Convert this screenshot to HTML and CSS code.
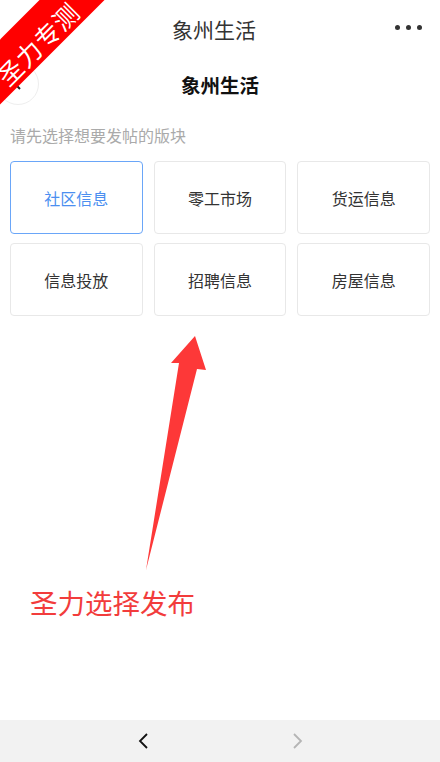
FILE: index.html
```html
<!DOCTYPE html>
<html lang="zh-CN">
<head>
    <meta charset="UTF-8">
    <meta name="viewport" content="width=device-width, initial-scale=1.0">
    <title>象州生活</title>
    <link rel="stylesheet" href="styles.css">
</head>
<body>
    <div class="page">

        <!-- Top Bar -->
        <div class="top-bar">
            <span class="top-title">象州生活</span>
            <div class="more-dots">
                <span></span><span></span><span></span>
            </div>
        </div>

        <!-- Page Header -->
        <div class="page-header">
            <div class="back-btn">
                <svg width="12" height="14" viewBox="0 0 12 14">
                    <path d="M8 2 L3 7 L8 12" fill="none" stroke="#222" stroke-width="2"/>
                </svg>
            </div>
            <h1 class="page-title">象州生活</h1>
        </div>

        <!-- Main Content -->
        <div class="main-content">
            <p class="hint">请先选择想要发帖的版块</p>
            <div class="board-grid">
                <div class="board-item active">社区信息</div>
                <div class="board-item">零工市场</div>
                <div class="board-item">货运信息</div>
                <div class="board-item">信息投放</div>
                <div class="board-item">招聘信息</div>
                <div class="board-item">房屋信息</div>
            </div>
        </div>

        <!-- Bottom Nav -->
        <div class="bottom-bar">
            <svg width="14" height="18" viewBox="0 0 14 18">
                <path d="M10 2 L3 9 L10 16" fill="none" stroke="#111" stroke-width="1.8"/>
            </svg>
            <svg width="14" height="18" viewBox="0 0 14 18">
                <path d="M4 2 L11 9 L4 16" fill="none" stroke="#b5b5b5" stroke-width="1.8"/>
            </svg>
        </div>

        <!-- Annotation overlays -->
        <div class="ribbon"><span>圣力专测</span></div>
        <svg class="note-arrow" width="440" height="762" viewBox="0 0 440 762">
            <polygon points="146,570 197,369 206,370 195,336 171,363 179,363" fill="#fd3838"/>
        </svg>
        <div class="note-text">圣力选择发布</div>
    </div>
</body>
</html>
```

FILE: styles.css
```css
body {
    margin: 0;
    padding: 0;
    font-family: "Noto Sans CJK SC", "Noto Sans", sans-serif;
    background-color: #ffffff;
    color: #333;
}

.page {
    position: relative;
    width: 440px;
    height: 762px;
    display: flex;
    flex-direction: column;
    overflow: hidden;
}

/* Top bar */
.top-bar {
    height: 58px;
    display: flex;
    align-items: center;
    justify-content: center;
    position: relative;
}

.top-title {
    font-size: 21px;
    color: #333;
    margin-right: 12px;
}

.more-dots {
    position: absolute;
    right: 18px;
    top: 25px;
    display: flex;
    gap: 6px;
}

    .more-dots span {
        width: 5px;
        height: 5px;
        border-radius: 50%;
        background-color: #333;
    }

/* Page header */
.page-header {
    height: 52px;
    display: flex;
    align-items: center;
    justify-content: center;
    position: relative;
}

.page-title {
    margin: 0;
    font-size: 19.5px;
    font-weight: bold;
    color: #111;
}

.back-btn {
    position: absolute;
    left: -3px;
    top: 5px;
    width: 40px;
    height: 40px;
    border: 1px solid #eee;
    border-radius: 50%;
    display: flex;
    align-items: center;
    justify-content: center;
}

/* Main content */
.main-content {
    flex: 1;
    padding: 0 10px;
}

.hint {
    margin: 15px 0 15px;
    font-size: 16px;
    color: #aaa;
    line-height: 21px;
}

.board-grid {
    display: grid;
    grid-template-columns: repeat(3, 1fr);
    column-gap: 11px;
    row-gap: 9px;
}

.board-item {
    height: 71px;
    border: 1px solid #e8e8e8;
    border-radius: 4px;
    display: flex;
    align-items: center;
    justify-content: center;
    font-size: 16px;
    color: #333;
}

    .board-item.active {
        border-color: #6aa6f8;
        color: #4b8ff0;
    }

/* Bottom bar */
.bottom-bar {
    height: 42px;
    background-color: #f2f2f2;
    display: flex;
    align-items: center;
    justify-content: center;
    gap: 139px;
}

/* Annotations */
.ribbon {
    position: absolute;
    left: -64px;
    top: 13px;
    width: 200px;
    height: 46px;
    background-color: #ff0000;
    color: #fff;
    font-size: 25px;
    line-height: 46px;
    text-align: center;
    transform: rotate(-45deg);
    overflow: hidden;
}

    .ribbon span {
        display: inline-block;
        position: relative;
        top: 6px;
        left: -4px;
        letter-spacing: 1px;
    }

.note-arrow {
    position: absolute;
    left: 0;
    top: 0;
    pointer-events: none;
}

.note-text {
    position: absolute;
    left: 30px;
    top: 583px;
    font-size: 27.5px;
    line-height: 38px;
    color: #f23c3c;
}
```
